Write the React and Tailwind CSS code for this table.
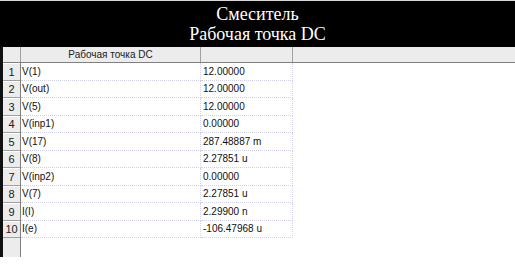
import React from "react";

const rows = [
  ["V(1)", "12.00000"],
  ["V(out)", "12.00000"],
  ["V(5)", "12.00000"],
  ["V(inp1)", "0.00000"],
  ["V(17)", "287.48887 m"],
  ["V(8)", "2.27851 u"],
  ["V(inp2)", "0.00000"],
  ["V(7)", "2.27851 u"],
  ["I(I)", "2.29900 n"],
  ["I(e)", "-106.47968 u"],
];

export default function App() {
  return (
    <div className="w-[515px] h-[276px] bg-white overflow-hidden" style={{ fontFamily: "'Liberation Sans', Arial, sans-serif" }}>
      <div className="h-px bg-[#d8d8d8]" />
      <div
        className="h-[46px] bg-black text-white text-center text-[18px] leading-[20px] pt-[3px]"
        style={{ fontFamily: "'Liberation Serif', 'Times New Roman', serif" }}
      >
        <div>Смеситель</div>
        <div>Рабочая точка DC</div>
      </div>
      <div className="flex h-[210px]">
        <div className="w-[3px] bg-[#101010]" />
        <div className="flex-1 flex flex-col">
          <div className="flex h-[16px] bg-[#ececec] border-b border-[#808080] text-[10px] text-[#202020]">
            <div className="w-[18px] border-r border-[#a0a0a0]" />
            <div className="w-[180px] border-r border-[#a0a0a0] flex items-center justify-center">Рабочая точка DC</div>
            <div className="w-[92px] border-r border-[#a0a0a0]" />
            <div className="flex-1" />
          </div>
          <div className="flex flex-1">
            <div className="w-[18px] bg-[#ececec] border-r border-[#808080] flex flex-col">
              {rows.map((r, i) => (
                <div
                  key={i}
                  className="h-[17.5px] border-b border-[#a0a0a0] border-t border-t-white flex items-center justify-center text-[11px] text-[#202020]"
                >
                  {i + 1}
                </div>
              ))}
            </div>
            <div className="flex flex-col">
              {rows.map((r, i) => (
                <div key={i} className="flex h-[17.5px] text-[10px] text-[#101010]">
                  <div className="w-[180px] border-b border-r border-dotted border-[#cfcfee] flex items-center pl-[1px]">{r[0]}</div>
                  <div className="w-[92px] border-b border-r border-dotted border-[#cfcfee] flex items-center pl-[2px]">{r[1]}</div>
                </div>
              ))}
            </div>
          </div>
        </div>
      </div>
    </div>
  );
}
